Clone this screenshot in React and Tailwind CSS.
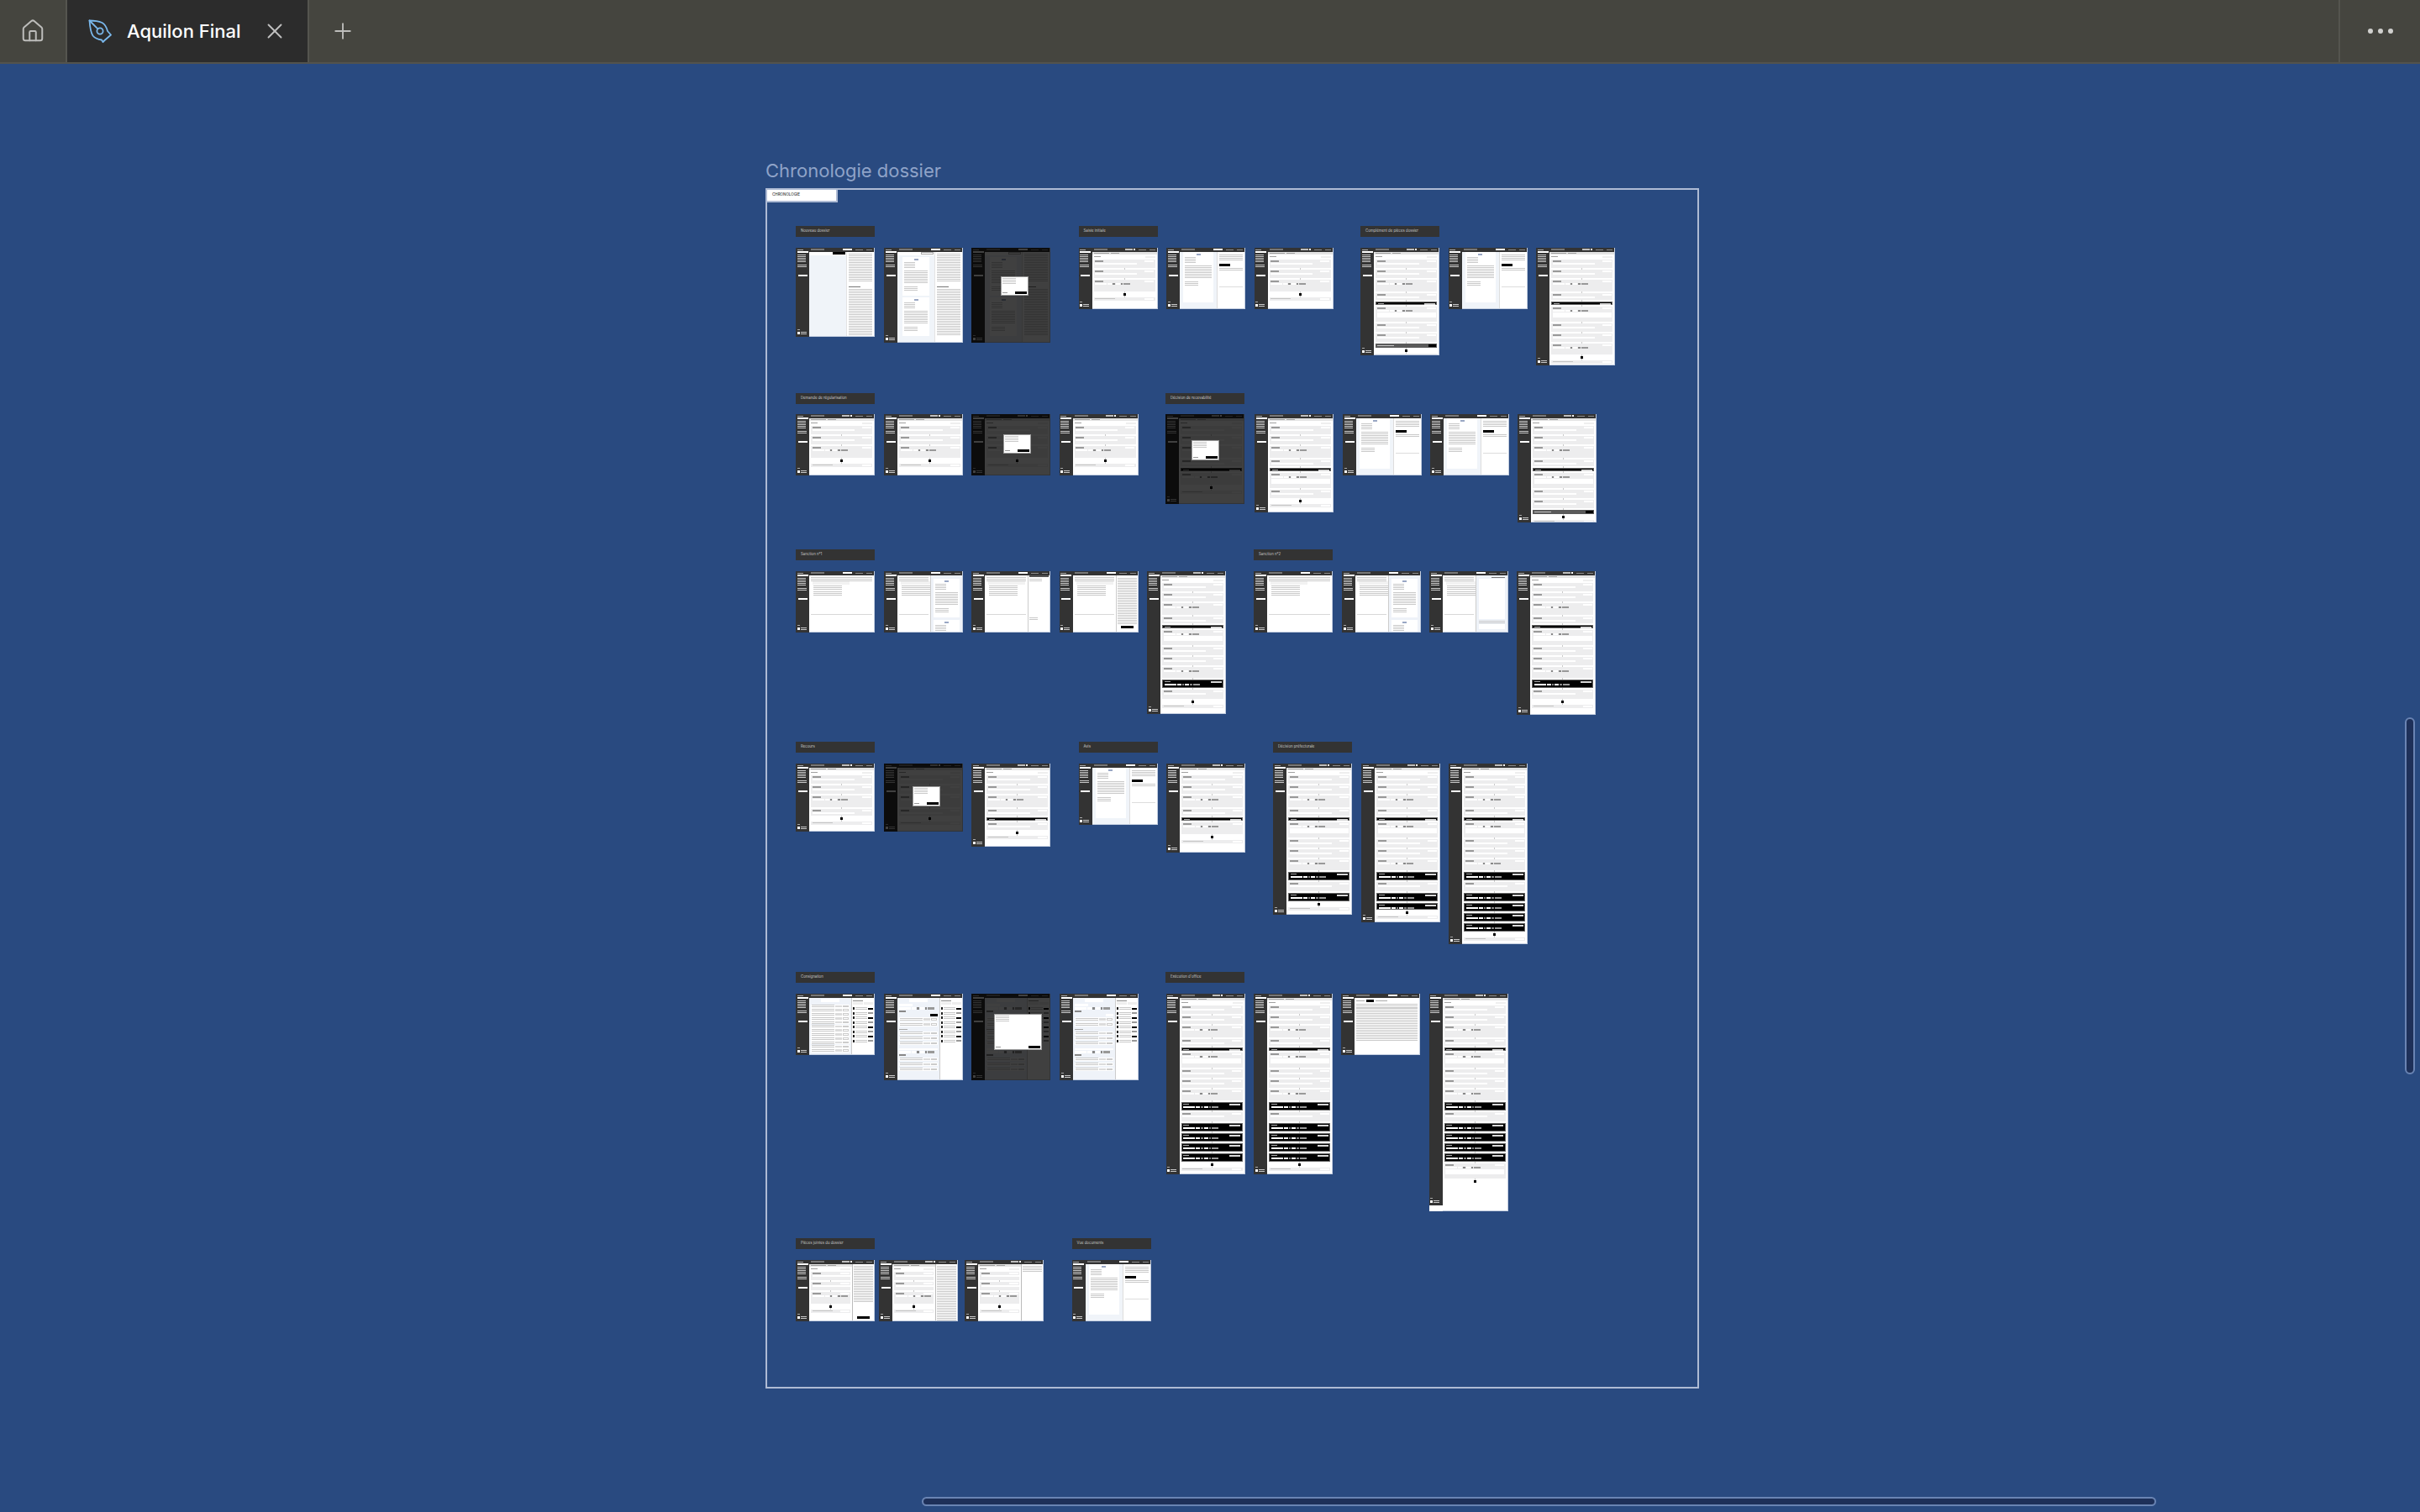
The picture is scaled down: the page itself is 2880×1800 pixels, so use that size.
import { House, Plus, X } from 'lucide-react';

// heights come from reading the reference, gap is 2px between blocks
const BASE = 's10 s10 s14';
const TALL = `${BASE} s8 k4 s18 s10 s10 s13`;
const F_A = `${BASE} dot f4`;
const F_81 = `${BASE} s8 dot f4`;
const F_99 = `${BASE} s8 k4 s9 dot f4`;
const F_106 = `${BASE} s8 k4 s14 dot f4`;
const F_117 = `${BASE} s8 k4 s18 s10 dot f4`;
const F_128 = `${BASE} s8 k4 s18 s10 s10 g5 dot f4`;
const F_140 = `${TALL} dot f4`;
const F_170 = `${TALL} k10 s11 dot f4`;
const F_180 = `${TALL} k10 s11 k10 dot f4`;
const F_189 = `${TALL} k10 s11 k10 k8 dot f4`;
const F_215 = `${TALL} k10 s11 k10 k10 k10 k10 dot f4`;
const F_259 = `${TALL} k10 s11 k10 k10 k10 k10 s18 dot`;

const labels = [
  { x: 947, y: 269, t: 'Nouveau dossier' },
  { x: 1283.5, y: 269, t: 'Saisie initiale' },
  { x: 1619, y: 269, t: 'Complément de pièces dossier' },
  { x: 947, y: 468, t: 'Demande de régularisation' },
  { x: 1387, y: 468, t: 'Décision de recevabilité' },
  { x: 947, y: 654, t: 'Sanction n°1' },
  { x: 1492, y: 654, t: 'Sanction n°2' },
  { x: 947, y: 883, t: 'Recours' },
  { x: 1283.5, y: 883, t: 'Avis' },
  { x: 1515, y: 883, t: 'Décision préfectorale' },
  { x: 947, y: 1157, t: 'Consignation' },
  { x: 1387, y: 1157, t: 'Exécution d\'office' },
  { x: 947, y: 1474, t: 'Pièces jointes du dossier' },
  { x: 1275.5, y: 1474, t: 'Vue documents' },
];

const frames = [
  // row 1
  { x: 947, y: 295, h: 106, kind: 'list' },
  { x: 1052, y: 295, h: 113, kind: 'pages' },
  { x: 1156, y: 295, h: 113, kind: 'pages', modal: [33, 23, 9, 22] },
  { x: 1283.5, y: 295, h: 73, spec: F_A },
  { x: 1388, y: 295, h: 73, kind: 'letter' },
  { x: 1492.5, y: 295, h: 73, spec: F_A },
  { x: 1619, y: 295, h: 128, spec: F_128 },
  { x: 1723.5, y: 295, h: 73, kind: 'letter' },
  { x: 1828, y: 295, h: 140, spec: F_140 },
  // row 2
  { x: 947, y: 493, h: 73, spec: F_A },
  { x: 1052, y: 493, h: 73, spec: F_A },
  { x: 1156, y: 493, h: 73, spec: F_A, modal: [33, 23, 15, 2] },
  { x: 1260.5, y: 493, h: 73, spec: F_A },
  { x: 1387, y: 493, h: 107, spec: F_106, modal: [33, 24, 0, 21] },
  { x: 1493, y: 493, h: 117, spec: F_117 },
  { x: 1598, y: 493, h: 73, kind: 'letter' },
  { x: 1702, y: 493, h: 73, kind: 'letter' },
  { x: 1806, y: 493, h: 129, spec: F_128 },
  // row 3
  { x: 947, y: 680, h: 73, kind: 'text' },
  { x: 1052, y: 680, h: 73, kind: 'text', side: 'doc' },
  { x: 1156, y: 680, h: 73, kind: 'text', side: 'blank' },
  { x: 1260.5, y: 680, h: 73, kind: 'text', side: 'notes' },
  { x: 1365, y: 680, h: 170, spec: F_170 },
  { x: 1492, y: 680, h: 73, kind: 'text' },
  { x: 1597, y: 680, h: 73, kind: 'text', side: 'doc' },
  { x: 1701, y: 680, h: 73, kind: 'text', side: 'tinted' },
  { x: 1805, y: 680, h: 171, spec: F_170 },
  // row 4
  { x: 947, y: 909, h: 81, spec: F_81 },
  { x: 1052, y: 909, h: 81, spec: F_81, modal: [33, 24, 6, 3] },
  { x: 1156, y: 909, h: 99, spec: F_99 },
  { x: 1283.5, y: 909, h: 73, kind: 'letter' },
  { x: 1388, y: 909, h: 106, spec: F_106 },
  { x: 1515, y: 909, h: 180, spec: F_180 },
  { x: 1620, y: 909, h: 189, spec: F_189 },
  { x: 1724, y: 909, h: 215, spec: F_215 },
  // row 5
  { x: 947, y: 1183, h: 73, kind: 'table' },
  { x: 1052, y: 1183, h: 103, kind: 'plan' },
  { x: 1156, y: 1183, h: 103, kind: 'plan', modal: [57, 43, 16, 13] },
  { x: 1261, y: 1183, h: 103, kind: 'plan', soft: true },
  { x: 1387.5, y: 1183, h: 215, spec: F_215 },
  { x: 1492, y: 1183, h: 215, spec: F_215 },
  { x: 1596, y: 1183, h: 73, kind: 'text', wide: true },
  { x: 1700.5, y: 1183, h: 259, spec: F_259, sideH: 252 },
  // row 6
  { x: 947, y: 1500, h: 73, spec: F_A, panel: 'button' },
  { x: 1046, y: 1500, h: 73, spec: F_A, panel: 'long' },
  { x: 1148, y: 1500, h: 73, spec: F_A, panel: 'short' },
  { x: 1275.5, y: 1500, h: 73, kind: 'letter' },
];

// greeked text, the copy is unreadable at this zoom
function Lines({ className = '', h = 10 }) {
  return (
    <div
      className={`bg-[repeating-linear-gradient(#c9c9c9_0_0.7px,transparent_0.7px_2px)] ${className}`}
      style={{ height: h }}
    />
  );
}

function Sidebar({ height }) {
  return (
    <div className="w-[16px] shrink-0 bg-[#333333] flex flex-col px-[1.5px] pt-[1.5px]" style={{ height }}>
      <div className="h-[1px] w-[7px] bg-[#aaaaaa]" />
      <div className="h-[2px] bg-white mt-[1.5px]" />
      <Lines h={9} className="mt-[2px] w-[10px]" />
      <Lines h={4} className="mt-[3px] w-[11px]" />
      <div className="h-[2px] bg-white mt-[8px] mx-[1px]" />
      <div className="flex-1" />
      <div className="h-[1px] w-[3px] bg-[#aaaaaa] mb-[2px]" />
      <div className="flex items-center gap-[1px] mb-[3px]">
        <div className="w-[3px] h-[3px] bg-white" />
        <Lines h={3} className="w-[7px]" />
      </div>
    </div>
  );
}

function Header({ chips = true }) {
  return (
    <div className="h-[4.7px] shrink-0 bg-[#333333] flex items-center gap-[1px] px-[2px]">
      <div className="h-[2px] w-[16px] bg-[#777777]" />
      <div className="flex-1" />
      {chips && <div className="h-[2px] w-[9px] bg-[#bdbdbd]" />}
      {chips && <div className="h-[2px] w-[2px] bg-white" />}
      {!chips && <div className="h-[2px] w-[11px] bg-white" />}
      <div className="h-[1px] w-[9px] ml-[3px] bg-[#8a8a8a]" />
      <div className="h-[1px] w-[7px] ml-[3px] bg-[#8a8a8a]" />
    </div>
  );
}

function Inputs() {
  return (
    <div className="flex gap-[1px] items-center">
      <div className="h-[2.5px] w-[14px] bg-white" />
      <div className="h-[2.5px] w-[5px] bg-white" />
      <div className="h-[2.5px] w-[2.5px] bg-[#888888]" />
      <div className="h-[2.5px] w-[5px] bg-white" />
      <div className="h-[2.5px] w-[2.5px] bg-[#888888]" />
      <div className="h-[2.5px] w-[8px] bg-[#999999]" />
    </div>
  );
}

function Block({ token }) {
  if (token === 'dot') {
    return (
      <div className="h-[3px] shrink-0 flex justify-center">
        <div className="w-[3px] h-[3px] bg-black" />
      </div>
    );
  }
  const type = token[0];
  const h = Number(token.slice(1));
  if (type === 'k') {
    return (
      <div className="shrink-0 bg-black border-[0.5px] border-[#666666] px-[1.5px] py-[1px] flex flex-col gap-[1px]" style={{ height: h }}>
        <div className="flex justify-between items-center">
          <div className="h-[1px] w-[7px] bg-[#aaaaaa]" />
          <div className="h-[2px] w-[13px] bg-[#d8d8d8]" />
        </div>
        {h > 6 && <Inputs />}
      </div>
    );
  }
  if (type === 'g') {
    return (
      <div className="shrink-0 bg-[#5a5a5a] px-[1.5px] flex items-center justify-between" style={{ height: h }}>
        <div className="h-[1px] w-[20px] bg-[#c4c4c4]" />
        <div className="h-[3px] w-[9px] bg-black" />
      </div>
    );
  }
  if (type === 'f') {
    return (
      <div className="shrink-0 bg-[#ededee] px-[1.5px] flex items-center justify-between" style={{ height: h }}>
        <div className="h-[1px] w-[24px] bg-[#c4c4c4]" />
        <div className="h-[2px] w-[11px] bg-white" />
      </div>
    );
  }
  return (
    <div className="shrink-0 bg-[#ededee] px-[1.5px] pt-[1px] flex flex-col gap-[1px] overflow-hidden" style={{ height: h }}>
      <div className="flex justify-between items-center">
        <div className="h-[1.2px] w-[10px] bg-[#999999]" />
        <div className="h-[2px] w-[11px] bg-white" />
      </div>
      {h > 12 ? <Inputs /> : <div className="h-[2.5px] w-[50px] bg-white" />}
      {h > 16 && <div className="h-[6px] bg-white" />}
    </div>
  );
}

function FormBody({ spec, panel }) {
  return (
    <div className="flex-1 min-h-0 flex overflow-hidden">
      <div className="flex-1 min-w-0 flex flex-col overflow-hidden bg-white">
        <div className="h-[3px] shrink-0 bg-[#e4e4e4] flex items-center gap-[2px] px-[2px]">
          <div className="h-[1px] w-[18px] bg-[#a0a0a0]" />
          <div className="h-[1px] w-[10px] bg-[#a0a0a0]" />
        </div>
        <div className="h-[6.3px] shrink-0 flex items-center justify-between px-[2px]">
          <div className="h-[1px] w-[8px] bg-[#a0a0a0]" />
          <div className="h-[2px] w-[12px] bg-[#efefef]" />
        </div>
        <div className="flex flex-col gap-[2px] mx-[2px] bg-[linear-gradient(#c9c9c9,#c9c9c9)] bg-no-repeat bg-center bg-[length:1px_100%]">
          {spec.split(' ').map((token, i) => <Block key={i} token={token} />)}
        </div>
      </div>
      {panel && (
        <div className="w-[26px] shrink-0 bg-white border-l border-[#bbbbbb] px-[1px] pt-[2px]">
          <Lines h={panel === 'short' ? 7 : panel === 'long' ? 66 : 44} />
          {panel === 'button' && <div className="h-[3px] w-[15px] bg-black mt-[16px] mx-auto" />}
        </div>
      )}
    </div>
  );
}

function Page({ className = '' }) {
  return (
    <div className={`bg-white px-[2px] pt-[2px] shrink-0 ${className}`}>
      <div className="h-[2px] w-[5px] mx-auto bg-[#9aa7c4]" />
      <Lines h={8} className="mt-[2px] w-[13px]" />
      <Lines h={16} className="mt-[2px]" />
      <Lines h={5} className="mt-[3px] w-[16px]" />
    </div>
  );
}

function ListBody({ pages }) {
  return (
    <div className="flex-1 min-h-0 flex overflow-hidden bg-white">
      <div className="w-[44px] shrink-0 bg-[#f0f4f9] flex flex-col">
        <div className="h-[4px] shrink-0 bg-white flex items-center justify-end px-[1px]">
          <div className={`h-[2.5px] w-[15px] ${pages ? 'border-[0.5px] border-[#aaaaaa]' : 'bg-black'}`} />
        </div>
        {pages && (
          <div className="flex flex-col items-center gap-[2px] pt-[2px]">
            <Page className="w-[32px] h-[46px]" />
            <Page className="w-[32px] h-[46px]" />
          </div>
        )}
      </div>
      <div className="flex-1 px-[2px] pt-[2px] border-l border-[#e3e3e3]">
        <Lines h={34} />
        <div className="h-[1px] w-[14px] bg-[#777777] mt-[5px]" />
        <Lines h={56} className="mt-[2px]" />
      </div>
    </div>
  );
}

function LetterBody() {
  return (
    <div className="flex-1 min-h-0 flex overflow-hidden bg-white">
      <div className="w-[44px] shrink-0 bg-[#f0f4f9] px-[4px]">
        <Page className="h-[60px]" />
      </div>
      <div className="flex-1 px-[2px] pt-[3px] border-l border-[#dddddd]">
        <Lines h={8} />
        <div className="h-[3px] w-[13px] bg-black mt-[3px]" />
        <Lines h={4} className="mt-[2px]" />
        <div className="h-[1px] bg-[#dddddd] mt-[18px]" />
      </div>
    </div>
  );
}

function TextSide({ side }) {
  if (side === 'doc') {
    return (
      <div className="w-[38px] shrink-0 bg-[#eef2f8] px-[3px] border-l border-[#cccccc] flex flex-col gap-[3px]">
        <div className="h-[2px] w-[22px] self-end bg-[#cccccc] mb-[1px]" />
        <Page className="h-[46px]" />
        <Page className="h-[30px]" />
      </div>
    );
  }
  if (side === 'blank') {
    return (
      <div className="w-[26px] shrink-0 bg-white border-l border-[#cccccc] px-[1px]">
        <div className="h-[2px] bg-[#555555]" />
        <Lines h={4} className="mt-[2px] w-[15px]" />
        <Lines h={3} className="mt-[42px] w-[10px]" />
      </div>
    );
  }
  if (side === 'notes') {
    return (
      <div className="w-[26px] shrink-0 bg-white border-l border-[#cccccc] px-[1px] flex flex-col">
        <Lines h={56} className="mt-[3px]" />
        <div className="h-[3px] w-[15px] bg-black mt-[1px] mx-auto" />
      </div>
    );
  }
  return (
    <div className="w-[38px] shrink-0 bg-[#eef2f8] px-[3px] border-l border-[#cccccc] pt-[2px] flex flex-col">
      <div className="h-[1.5px] w-[16px] self-end bg-[#777777] mb-[1px]" />
      <div className="h-[48px] bg-white" />
      <Lines h={4} className="mt-[2px]" />
      <div className="h-[6px] bg-white" />
    </div>
  );
}

function TextBody({ side, wide }) {
  return (
    <div className="flex-1 min-h-0 flex overflow-hidden bg-white">
      <div className="flex-1 min-w-0 px-[2px] pt-[2px]">
        {wide && (
          <div className="flex items-center gap-[2px] mb-[2px]">
            <div className="h-[1px] w-[10px] bg-[#aaaaaa]" />
            <div className="h-[3px] w-[9px] bg-black" />
            <div className="h-[1px] w-[14px] bg-[#aaaaaa]" />
          </div>
        )}
        <Lines h={5} />
        {wide ? (
          <Lines h={40} />
        ) : (
          <>
            <div className="h-[4px] w-[44px] ml-[2px] bg-[#f2f2f2]" />
            <Lines h={6} className="w-[34px] ml-[3px] mt-[1px]" />
            <Lines h={6} className="w-[34px] ml-[3px] mt-[1px]" />
            <div className="h-[1px] bg-[#d8d8d8] mt-[21px]" />
          </>
        )}
      </div>
      {side && <TextSide side={side} />}
    </div>
  );
}

function TableRow() {
  return (
    <div className="flex items-center gap-[1px] h-[4.5px] bg-white px-[1px]">
      <Lines h={3} className="flex-1" />
      <div className="h-[2.5px] w-[8px] bg-[#dcdcdc]" />
      <div className="h-[2.5px] w-[7px] border-[0.5px] border-[#cccccc]" />
    </div>
  );
}

function SideRow({ black }) {
  return (
    <div className="flex items-center gap-[1px] h-[4.5px]">
      <div className="h-[3px] w-[2px] bg-[#222222]" />
      <Lines h={3} className="flex-1" />
      <div className={`h-[2px] w-[6px] ${black ? 'bg-black' : 'bg-[#999999]'}`} />
    </div>
  );
}

function PlanBody({ table, soft }) {
  const rows = table ? 12 : 8;
  return (
    <div className="flex-1 min-h-0 flex overflow-hidden bg-white">
      <div className="flex-1 min-w-0 bg-[#eff3f9] px-[2px] pt-[1px] flex flex-col overflow-hidden">
        <div className="h-[4px] w-[22px] bg-white self-center shrink-0" />
        {table ? (
          <div className="flex flex-col gap-[0.3px] mt-[3px]">
            {Array.from({ length: rows }).map((_, i) => <TableRow key={i} />)}
          </div>
        ) : (
          <div className="flex flex-col mt-[2px] gap-[1.5px]">
            <div className="h-[3px] w-[16px] bg-white" />
            <Inputs />
            <div className="h-[2px] w-[8px] bg-[#888888]" />
            <div className={`h-[3px] w-[9px] self-end ${soft ? 'bg-white' : 'bg-black'}`} />
            <TableRow />
            <TableRow />
            <div className="h-[1px] w-[10px] bg-[#aaaaaa] mt-[2px]" />
            <TableRow />
            <TableRow />
            <TableRow />
            <div className="h-[2px] bg-white mt-[2px]" />
            <Inputs />
            <div className="h-[2px] w-[8px] bg-[#888888]" />
            <TableRow />
            <TableRow />
            <TableRow />
          </div>
        )}
      </div>
      <div className="w-[27px] shrink-0 border-l border-[#cccccc] px-[1px] pt-[3px] flex flex-col gap-[1px]">
        <div className="h-[1px] w-[12px] bg-[#888888]" />
        <div className="h-[3px] flex gap-[1px] mb-[2px]">
          <div className="flex-1 bg-[#eeeeee]" />
          <div className="flex-1 bg-[#eeeeee]" />
        </div>
        {Array.from({ length: 8 }).map((_, i) => <SideRow key={i} black={i % 2 === 0} />)}
      </div>
    </div>
  );
}

function Thumb({ f }) {
  return (
    <div
      className="absolute w-[94px] bg-white flex overflow-hidden"
      style={{ left: f.x, top: f.y - 76, height: f.h }}
    >
      <Sidebar height={f.sideH ?? f.h} />
      <div className="flex-1 min-w-0 flex flex-col border-b border-r border-[#c3cee0]">
        <Header chips={!!f.spec} />
        {f.spec && <FormBody spec={f.spec} panel={f.panel} />}
        {f.kind === 'list' && <ListBody />}
        {f.kind === 'pages' && <ListBody pages />}
        {f.kind === 'letter' && <LetterBody />}
        {f.kind === 'text' && <TextBody side={f.side} wide={f.wide} />}
        {f.kind === 'table' && <PlanBody table />}
        {f.kind === 'plan' && <PlanBody soft={f.soft} />}
      </div>
      {f.modal && (
        <div className="absolute inset-0 bg-black/75 flex items-center justify-center">
          <div
            className="bg-white border border-[#999999] flex flex-col p-[1px]"
            style={{ width: f.modal[0], height: f.modal[1], marginLeft: f.modal[2], marginBottom: f.modal[3] }}
          >
            <Lines h={8} className="w-[16px]" />
            <div className="flex-1" />
            <div className="flex justify-between items-center">
              <div className="h-[1px] w-[6px] bg-[#999999]" />
              <div className="h-[3px] w-[14px] bg-black" />
            </div>
          </div>
        </div>
      )}
    </div>
  );
}

function NibIcon() {
  return (
    <svg width="28" height="28" viewBox="0 0 28 28" fill="none" stroke="#7ab8ec" strokeWidth="1.8" strokeLinejoin="round" strokeLinecap="round">
      <path d="M1.5 1.5 C7 1.5 13 2.5 16.5 4 C20 6 22 10 23 14 L27 18.5 L19.5 25 L17.5 27 L16 24.5 C12 24 8 22.5 5.5 19.5 C3 16 2 8 1.5 1.5 Z" />
      <circle cx="14" cy="14" r="3.6" />
      <path d="M1.5 1.5 L11.4 11.4" />
    </svg>
  );
}

export default function App() {
  return (
    <div className="w-[2880px] h-[1800px] flex flex-col overflow-hidden bg-[#294a80] font-['Inter',sans-serif]">
      <div className="h-[76px] shrink-0 flex bg-[#45453f] border-b-2 border-[#53534d] text-[#c8c8c6]">
        <div className="w-[78px] flex items-center justify-center">
          <House size={30} strokeWidth={1.6} className="text-[#bdbdbb]" />
        </div>
        <div className="w-[290px] flex items-center bg-[#2c2c2c] border-x-2 border-[#55554f] pl-[25px]">
          <NibIcon />
          <span className="ml-[18px] text-[22px] font-medium text-white">Aquilon Final</span>
          <X size={30} strokeWidth={1.5} className="ml-[25px] text-[#c0c0c0]" />
        </div>
        <div className="w-[79px] flex items-center justify-center">
          <Plus size={30} strokeWidth={1.5} className="text-[#bdbdbb]" />
        </div>
        <div className="flex-1" />
        <div className="w-[97px] border-l-2 border-[#55554f] flex items-center justify-center gap-[6px]">
          <div className="w-[6px] h-[6px] rounded-full bg-[#d0d0ce]" />
          <div className="w-[6px] h-[6px] rounded-full bg-[#d0d0ce]" />
          <div className="w-[6px] h-[6px] rounded-full bg-[#d0d0ce]" />
        </div>
      </div>

      {/* free canvas, frames sit at their canvas coordinates */}
      <div className="flex-1 relative">
        <div className="absolute left-[911px] top-[113px] text-[22px] leading-[28px] text-[#8fa3c8]">Chronologie dossier</div>
        <div className="absolute left-[911px] top-[148px] w-[1111px] h-[1429px] border-2 border-[#aebbd4]" />
        <div className="absolute left-[911px] top-[148px] w-[86px] h-[17px] bg-white border-2 border-[#aebbd4] flex items-center pl-[6px]">
          <span className="text-[4.5px] font-medium uppercase text-[#333333]">Chronologie</span>
        </div>

        {labels.map(l => (
          <div
            key={l.x + '-' + l.y}
            className="absolute w-[94px] h-[13px] bg-[#333333] flex items-center pl-[6px] text-[4.3px] text-[#c8c8c8] whitespace-nowrap"
            style={{ left: l.x, top: l.y - 76 }}
          >
            {l.t}
          </div>
        ))}

        {frames.map(f => <Thumb key={f.x + '-' + f.y} f={f} />)}

        {/* canvas scrollbars */}
        <div className="absolute left-[2862px] top-[778px] w-[12px] h-[425px] rounded-full bg-[#1e3059] border-2 border-[#6a84b3]" />
        <div className="absolute left-[1097px] top-[1706px] w-[1469px] h-[11px] rounded-full bg-[#1e3059] border-2 border-[#6a84b3]" />
      </div>
    </div>
  );
}
